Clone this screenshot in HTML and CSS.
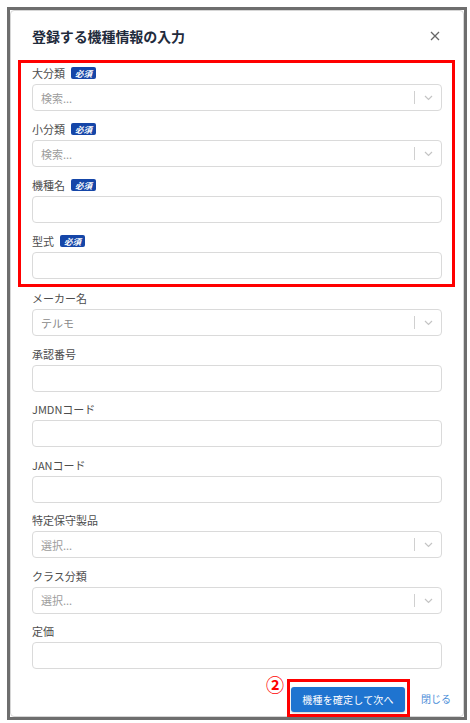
FILE: index.html
```html
<!DOCTYPE html>
<html lang="ja">
<head>
    <meta charset="UTF-8">
    <meta name="viewport" content="width=device-width, initial-scale=1.0">
    <title>登録する機種情報の入力</title>
    <link rel="stylesheet" href="styles.css">
</head>
<body>
    <div class="frame">
        <div class="modal">
            <div class="modal-header">
                <h2 class="modal-title">登録する機種情報の入力</h2>
                <button class="close-btn" aria-label="閉じる">
                    <svg width="10" height="10" viewBox="0 0 10 10">
                        <path d="M1 1 L9 9 M9 1 L1 9" stroke="#666" stroke-width="1.3" fill="none"/>
                    </svg>
                </button>
            </div>

            <div class="modal-body">
                <div class="mark-box mark-fields">
                    <div class="field">
                        <div class="field-label">大分類 <span class="badge">必須</span></div>
                        <div class="select">
                            <span class="select-value placeholder">検索...</span>
                            <span class="select-sep"></span>
                            <svg class="chevron" width="9" height="6" viewBox="0 0 9 6"><path d="M1 1 L4.5 4.5 L8 1" stroke="#c4c4c4" stroke-width="1.2" fill="none"/></svg>
                        </div>
                    </div>
                    <div class="field">
                        <div class="field-label">小分類 <span class="badge">必須</span></div>
                        <div class="select">
                            <span class="select-value placeholder">検索...</span>
                            <span class="select-sep"></span>
                            <svg class="chevron" width="9" height="6" viewBox="0 0 9 6"><path d="M1 1 L4.5 4.5 L8 1" stroke="#c4c4c4" stroke-width="1.2" fill="none"/></svg>
                        </div>
                    </div>
                    <div class="field">
                        <div class="field-label">機種名 <span class="badge">必須</span></div>
                        <input class="input" type="text">
                    </div>
                    <div class="field">
                        <div class="field-label">型式 <span class="badge">必須</span></div>
                        <input class="input" type="text">
                    </div>
                </div>

                <div class="field">
                    <div class="field-label">メーカー名</div>
                    <div class="select">
                        <span class="select-value filled">テルモ</span>
                        <span class="select-sep"></span>
                        <svg class="chevron" width="9" height="6" viewBox="0 0 9 6"><path d="M1 1 L4.5 4.5 L8 1" stroke="#c4c4c4" stroke-width="1.2" fill="none"/></svg>
                    </div>
                </div>
                <div class="field">
                    <div class="field-label">承認番号</div>
                    <input class="input" type="text">
                </div>
                <div class="field">
                    <div class="field-label">JMDNコード</div>
                    <input class="input" type="text">
                </div>
                <div class="field">
                    <div class="field-label">JANコード</div>
                    <input class="input" type="text">
                </div>
                <div class="field">
                    <div class="field-label">特定保守製品</div>
                    <div class="select">
                        <span class="select-value placeholder">選択...</span>
                        <span class="select-sep"></span>
                        <svg class="chevron" width="9" height="6" viewBox="0 0 9 6"><path d="M1 1 L4.5 4.5 L8 1" stroke="#c4c4c4" stroke-width="1.2" fill="none"/></svg>
                    </div>
                </div>
                <div class="field">
                    <div class="field-label">クラス分類</div>
                    <div class="select">
                        <span class="select-value placeholder">選択...</span>
                        <span class="select-sep"></span>
                        <svg class="chevron" width="9" height="6" viewBox="0 0 9 6"><path d="M1 1 L4.5 4.5 L8 1" stroke="#c4c4c4" stroke-width="1.2" fill="none"/></svg>
                    </div>
                </div>
                <div class="field">
                    <div class="field-label">定価</div>
                    <input class="input" type="text">
                </div>
            </div>

            <div class="modal-footer">
                <div class="mark-box mark-button">
                    <span class="mark-num">②</span>
                    <button class="btn-primary">機種を確定して次へ</button>
                </div>
                <a class="link-close" href="#">閉じる</a>
            </div>
        </div>
    </div>
</body>
</html>
```

FILE: styles.css
```css
* { margin: 0; padding: 0; box-sizing: border-box; }
body {
    font-family: "Noto Sans CJK JP", "Noto Sans", sans-serif;
    background: #fff;
    color: #444;
}

/* screenshot frame */
.frame {
    margin: 7px 0 0 7px;
    width: 460px;
    height: 713px;
    border: 3px solid #6e6e6e;
}
.modal {
    height: 100%;
    background: #fff;
    border: 1px solid #d6d6d6;
    border-radius: 4px;
}
.modal-header {
    height: 49px;
    padding: 0 21px;
    display: flex;
    align-items: center;
    justify-content: space-between;
}
.modal-title {
    font-size: 14px;
    font-weight: bold;
    color: #1f2b3c;
    letter-spacing: -0.1px;
}
.close-btn {
    background: none;
    border: none;
    width: 12px;
    height: 12px;
    display: flex;
    align-items: center;
    justify-content: center;
    margin-right: 1px;
    margin-top: 1px;
}
.modal-body {
    padding: 0 21px;
}

/* annotation boxes */
.mark-box {
    border: 3px solid #f00;
    position: relative;
}
.mark-fields {
    margin: 0 -13px 4px -14px;
    padding: 3px 10px 5px 11px;
}
.mark-fields .field { margin-bottom: 11px; }
.mark-fields .field:last-child { margin-bottom: 0; }

/* fields */
.field {
    margin-bottom: 10.5px;
}
.field-label {
    display: flex;
    align-items: center;
    gap: 6px;
    height: 14px;
    margin-bottom: 4px;
    font-size: 11px;
    color: #4d4d4d;
}
.badge {
    display: inline-block;
    height: 12px;
    line-height: 12px;
    padding: 0 4px;
    border-radius: 2px;
    background: #1546a8;
    color: #fff;
    font-size: 8.5px;
    font-weight: bold;
    font-style: italic;
}
.select, .input {
    width: 100%;
    height: 27px;
    border: 1px solid #dadada;
    border-radius: 4px;
    background: #fff;
}
.select {
    display: flex;
    align-items: center;
    padding-left: 8px;
}
.select-value {
    flex: 1;
    font-size: 11px;
}
.placeholder { color: #9c9c9c; }
.filled { color: #8a8a8a; }
.select-sep {
    width: 1px;
    height: 13px;
    background: #d0d0d0;
}
.chevron {
    margin: 1px 8px 0 9px;
}
.input {
    display: block;
    font: inherit;
}

/* footer */
.modal-footer {
    display: flex;
    justify-content: flex-end;
    align-items: center;
    padding-right: 12px;
    margin-top: -1px;
}
.mark-button {
    padding: 5px 2px 2px 1px;
    margin-right: 11px;
}
.mark-num {
    position: absolute;
    left: -24px;
    top: -11px;
    font-size: 18px;
    font-weight: bold;
    color: #f00;
}
.btn-primary {
    display: block;
    width: 114px;
    height: 25px;
    background: #1f74d0;
    color: #fff;
    border: none;
    border-radius: 3px;
    font-family: inherit;
    font-size: 10px;
    letter-spacing: 0.2px;
    box-shadow: 0 1px 2px rgba(0,0,0,0.2);
}
.link-close {
    font-size: 10px;
    color: #4a8ed8;
    text-decoration: none;
    margin-top: 2px;
}
```
